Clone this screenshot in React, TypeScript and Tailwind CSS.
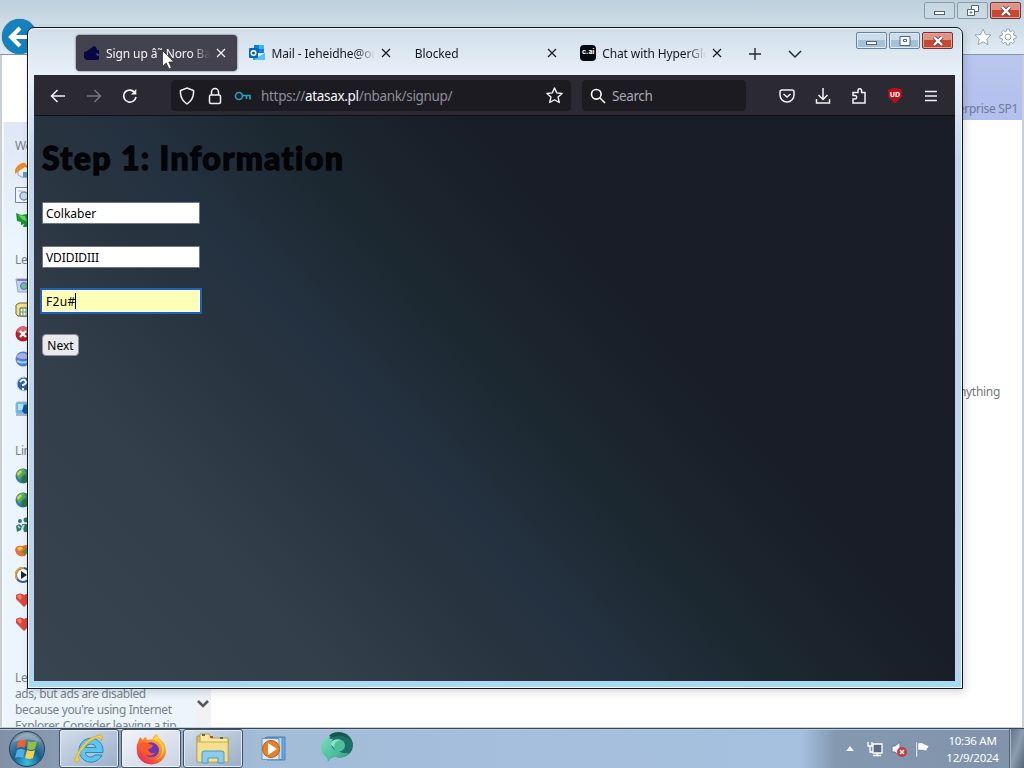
import type { ReactNode } from "react";

type TabProps = {
  title: string;
  icon?: ReactNode;
  active?: boolean;
};

type CaptionProps = {
  inactive?: boolean;
  restored?: boolean;
};

function CloseIcon() {
  return (
    <svg viewBox="0 0 10 10" className="size-2.5 shrink-0" stroke="currentColor" strokeWidth="1.2">
      <path d="M1 1l8 8M9 1L1 9" />
    </svg>
  );
}

function WalletIcon() {
  return (
    <svg viewBox="0 0 16 16" className="size-4 shrink-0">
      <path d="M0 7l3-1 7-5 2 1 1 3h2v4h-2v2h2v3l-1 1H2l-2-2z" fill="#080742" />
      <circle cx="13" cy="9" r="1" fill="#494063" />
    </svg>
  );
}

function OutlookIcon() {
  return (
    <svg viewBox="0 0 16 16" className="size-4 shrink-0">
      <path d="M5 0h10v8H5z" fill="#1682cf" />
      <path d="M10 0h5v4h-5z" fill="#35b8f1" />
      <path d="M5 4h5v4H5z" fill="#0b62ad" />
      <path d="M4 8l6 4 6-4v7H4z" fill="#2aa6e5" />
      <path d="M16 8v7H5z" fill="#50c8f4" />
      <rect y="3" width="9" height="10" rx="1" fill="#0867b8" />
      <circle cx="4.5" cy="8" r="2.3" fill="none" stroke="#fff" strokeWidth="1.4" />
    </svg>
  );
}

function CharacterIcon() {
  return (
    <span className="flex size-4 shrink-0 items-center justify-center rounded-[4px] bg-[#050912] pb-0.5 font-['Inter'] text-[7px] font-bold text-white">
      c.ai
    </span>
  );
}

function Tab({ title, icon, active }: TabProps) {
  return (
    <div
      className={
        active
          ? "flex h-9 w-[161px] items-center gap-1.5 rounded-[4px] bg-[#44424e] pr-[11px] pl-2 text-[#f4f4f8] shadow-[0_0_2px_#33313b]"
          : "flex h-9 w-[161px] items-center gap-1.5 pr-[11px] pl-2 text-[#15191e]"
      }
    >
      {icon}
      <span className="min-w-0 flex-1 overflow-hidden pt-0.5 text-[12px] tracking-[-0.1px] whitespace-nowrap [mask-image:linear-gradient(to_right,#000_82%,transparent)]">
        {title}
      </span>
      <CloseIcon />
    </div>
  );
}

function CaptionButtons({ inactive, restored }: CaptionProps) {
  const plain = inactive
    ? "flex h-[17px] w-[31px] items-center justify-center rounded-[2px] border border-[#8a9dab] bg-[#cddbe5]/50"
    : "flex h-[17px] w-[31px] items-center justify-center rounded-[2px] border border-[#6481a0] bg-linear-to-b from-[#cbdced] from-50% to-[#a5c0d9] to-50% shadow-[inset_0_0_0_1px_#e0ebf5]";
  return (
    <div className="flex">
      <div className={plain}>
        <svg viewBox="0 0 12 10" className="h-2.5 w-3">
          <rect x="0.5" y="5.5" width="10" height="3" fill="#fff" stroke="#536478" />
        </svg>
      </div>
      <div className={`ml-[2px] ${plain}`}>
        <svg viewBox="0 0 12 12" className="size-3" fill="#f7fbff" stroke="#536478">
          {restored ? (
            <>
              <path d="M4.5.5h7v6h-7z" />
              <path d="M.5 4.5h7v6h-7z" />
              <path d="M3 7h2v1H3z" strokeWidth="0.8" />
            </>
          ) : (
            <>
              <path d="M1 1.5h10v9H1z" />
              <path d="M4.5 4.5h3v2h-3z" />
            </>
          )}
        </svg>
      </div>
      <div className="ml-[2px] flex h-[17px] w-[31px] items-center justify-center rounded-[2px] border border-[#71333a] bg-linear-to-b from-[#df9183] from-50% to-[#c74733] to-50% shadow-[inset_0_0_0_1px_#e8a294]">
        <svg viewBox="0 0 12 10" className="h-2.5 w-3">
          <path d="M2 1l8 8M10 1L2 9" stroke="#6a4448" strokeWidth="4" />
          <path d="M2 1l8 8M10 1L2 9" stroke="#fff" strokeWidth="2.4" />
        </svg>
      </div>
    </div>
  );
}

function House() {
  return (
    <svg viewBox="0 0 16 16" className="size-4">
      <path d="M3 7l6-5 6 5v7l-6 2-6-3z" fill="#e9eef4" stroke="#8ca5c4" />
      <path d="M0 8C2 3 7 0 10 1l5 6-5-2-6 4-4 3z" fill="#ed8a25" />
      <path d="M8 10h4v5H8z" fill="#5a9bd6" />
    </svg>
  );
}

function PageSearch() {
  return (
    <svg viewBox="0 0 16 16" className="size-4">
      <path d="M.5.5h14v15H.5z" fill="#f1f5fb" stroke="#7087a5" />
      <circle cx="9" cy="9" r="4" fill="#c9ddf2" stroke="#8292aa" strokeWidth="1.5" />
      <path d="M3 4h5" stroke="#a8b9cf" />
    </svg>
  );
}

function GreenArrow() {
  return (
    <svg viewBox="0 0 16 16" className="size-4">
      <path d="M1 1l5 2 6-1 4 7-2 6H8l1-3-3 1v-3l-4-1z" fill="#159632" />
      <path d="M3 3l7 1 2 5-4-1z" fill="#67d456" />
    </svg>
  );
}

function Recycle() {
  return (
    <svg viewBox="0 0 16 16" className="size-4">
      <path d="M1 2h14l-2 13H3z" fill="#c4d4ee" stroke="#94a6cd" />
      <circle cx="9" cy="9" r="3.5" fill="#73b9ab" stroke="#63719f" />
      <path d="M2 3h12" stroke="#8677c0" strokeWidth="2" />
    </svg>
  );
}

function Calendar() {
  return (
    <svg viewBox="0 0 16 16" className="size-4">
      <path d="M1 3l3-2h11v13H3l-2-2z" fill="#eee28a" stroke="#716a3c" />
      <path d="M5 6h9v8H5z" fill="#f5faf0" stroke="#466c4b" />
      <path d="M8 6v8M11 6v8M5 10h9" stroke="#7a987c" />
    </svg>
  );
}

function RedCross() {
  return (
    <svg viewBox="0 0 16 16" className="size-4">
      <circle cx="8" cy="8" r="7.5" fill="#b81e2a" />
      <path d="M2 6a6 6 0 0112 0q-6 3-12 0" fill="#dc6770" />
      <path d="M5 5l6 6M11 5l-6 6" stroke="#fff" strokeWidth="2.4" />
    </svg>
  );
}

function BlueBall() {
  return (
    <svg viewBox="0 0 16 16" className="size-4">
      <circle cx="8" cy="8" r="7.5" fill="#597cd0" />
      <path d="M1 6q6-8 14 0-7 4-14 0" fill="#a9b1ea" />
      <path d="M2 10q6 3 12 0" fill="none" stroke="#8ed4f3" strokeWidth="2" />
    </svg>
  );
}

function HelpBall() {
  return (
    <svg viewBox="0 0 16 16" className="size-4">
      <circle cx="9" cy="8" r="7" fill="#315fae" stroke="#bdd6ef" />
      <path d="M5 6q4-5 6 0 0 2-3 3v1M8 12v2" fill="none" stroke="#fff" strokeWidth="2" />
    </svg>
  );
}

function Monitor() {
  return (
    <svg viewBox="0 0 16 16" className="size-4">
      <rect x="1" y="1" width="14" height="12" rx="2" fill="#6bb5e2" stroke="#9ab8d5" />
      <path d="M3 3h5v6H3z" fill="#a9e8f2" />
      <path d="M9 4l5-1v9l-4 1-3-3z" fill="#1254a4" />
      <path d="M1 14h13" stroke="#a6b9ce" strokeWidth="2" />
    </svg>
  );
}

function Globe() {
  return (
    <svg viewBox="0 0 16 16" className="size-4">
      <circle cx="8" cy="8" r="7.5" fill="#2d79bf" />
      <path d="M1 6q3-6 8-5l2 4-4 3-3 4z" fill="#61ad3d" />
      <path d="M8 8l6-1 1 4-5 4-4-1z" fill="#2d7735" />
      <path d="M2 5l4-3 1 2-4 4z" fill="#c3d866" />
    </svg>
  );
}

function People() {
  return (
    <svg viewBox="0 0 16 16" className="size-4" fill="#317a6c">
      <circle cx="5" cy="4" r="2" />
      <circle cx="11" cy="3" r="2.5" />
      <path d="M1 9l3-2 3 2-1 4-4 2zM7 7h6l2 8H9z" />
      <path d="M3 9l2 2M9 8l-2 5" stroke="#b9e2d6" strokeWidth="1.5" />
    </svg>
  );
}

function Swatch() {
  return (
    <svg viewBox="0 0 16 16" className="size-4">
      <path d="M0 8q1-5 7-4l8-2v4l-5 8q-8 2-10-6" fill="#e96d35" />
      <path d="M2 6q5-3 6 1L4 9z" fill="#f2c552" />
      <path d="M7 10l7-6 2 3-6 6z" fill="#4b973f" />
    </svg>
  );
}

function MediaBall() {
  return (
    <svg viewBox="0 0 16 16" className="size-4">
      <circle cx="8" cy="8" r="7" fill="#f8faf6" stroke="#315caa" strokeWidth="2" />
      <path d="M2 12A7 7 0 019 1" fill="none" stroke="#e5a031" strokeWidth="2" />
      <path d="M6 4l6 4-6 4z" fill="#172439" />
    </svg>
  );
}

function Heart() {
  return (
    <svg viewBox="0 0 16 16" className="size-4">
      <path d="M9 15L1 7V3q4-3 8 0 4-3 7 0v5z" fill="#e34539" />
      <path d="M2 4q3-3 5 1L5 8z" fill="#f28273" />
    </svg>
  );
}

const sections = [
  { label: "We", className: "mt-3", icons: [House, PageSearch, GreenArrow] },
  { label: "Le", className: "mt-4", icons: [Recycle, Calendar, RedCross, BlueBall, HelpBall, Monitor] },
  { label: "Lin", className: "mt-[18px]", icons: [Globe, Globe, People, Swatch, MediaBall, Heart, Heart] },
];

function ExplorerWindow() {
  return (
    <div className="flex h-[728px] w-full flex-col overflow-hidden">
      <header className="flex h-[55px] items-start justify-between border-b border-[#8796a5] bg-linear-to-b from-[#bdd0dc] to-[#e1ebf5]">
        <div className="mt-[19px] ml-0.5 flex size-[35px] items-center justify-center rounded-full bg-[#1682bd] shadow-[0_0_1px_#315d79]">
          <svg viewBox="0 0 24 24" className="size-6" fill="none" stroke="#fff" strokeWidth="4">
            <path d="M22 12H3M12 3l-9 9 9 9" />
          </svg>
        </div>
        <div className="flex flex-col items-end pt-0.5 pr-[3px]">
          <CaptionButtons inactive restored />
          <div className="mt-[9px] mr-1 flex gap-[7px]">
            <svg viewBox="0 0 18 18" className="size-[18px]" fill="#fff" stroke="#9aa8b2">
              <path d="M9 1l2.4 5.4 5.6.6-4.2 3.9 1.2 5.8L9 13.8l-5 2.9 1.2-5.8L1 7l5.6-.6z" />
            </svg>
            <svg viewBox="0 0 18 18" className="size-[18px]" fill="#fff" stroke="#9aa8b2">
              <path d="M7.5 1h3v2.1l1.6.7 1.6-1.5 2 2-1.5 1.6.7 1.6H17v3h-2.1l-.7 1.6 1.5 1.6-2 2-1.6-1.5-1.6.7V17h-3v-2.1l-1.6-.7-1.6 1.5-2-2 1.5-1.6-.7-1.6H1v-3h2.1l.7-1.6-1.5-1.6 2-2 1.6 1.5 1.6-.7z" />
              <circle cx="9" cy="9" r="3" />
            </svg>
          </div>
        </div>
      </header>
      <div className="flex min-h-0 flex-1 border-x-2 border-b border-[#c9d0d5] bg-white">
        <aside className="mt-[67px] flex w-[209px] shrink-0 overflow-hidden border-l-2 border-[#f5f7fb] bg-linear-to-b from-[#dfe6f6] to-[#ebf5fb] to-20%">
          <div className="w-[190px] pl-[11px] text-[12px] text-[#78828f]">
            {sections.map(({ label, className, icons }) => (
              <section key={label} className={className}>
                <h2 className="h-6 leading-6 tracking-[-0.4px]">{label}</h2>
                {icons.map((Icon, index) => (
                  <div key={index} className="flex h-[24.8px] items-center">
                    <Icon />
                  </div>
                ))}
              </section>
            ))}
            <p className="mt-[33px] text-[12px] leading-4 tracking-[-0.38px] whitespace-nowrap">
              Le
              <br />
              ads, but ads are disabled
              <br />
              because you're using Internet
              <br />
              Explorer. Consider leaving a tip
            </p>
          </div>
          <div className="flex flex-1 items-end justify-center bg-[#f0f2f5] pb-[18px]">
            <svg viewBox="0 0 12 9" className="h-[9px] w-3" fill="none" stroke="#525960" strokeWidth="2.5">
              <path d="M1 1l5 5 5-5" />
            </svg>
          </div>
        </aside>
        <main className="flex flex-1 flex-col items-end text-[12px] tracking-[-0.3px]">
          <div className="flex h-[65px] w-full items-end justify-end bg-linear-to-b from-[#b9c6ec] to-[#b3bfee] pr-1 pb-0.5 text-[#6f7999]">
            Enterprise SP1
          </div>
          <p className="mt-[263px] pr-[22px] text-[#73777c]">anything</p>
        </main>
      </div>
    </div>
  );
}

function TabStrip() {
  return (
    <div className="flex h-[47px] items-start pt-[7px] pl-[42px]">
      <div className="flex gap-[4.4px]">
        <Tab title="Sign up â˜ Noro Bank" icon={<WalletIcon />} active />
        <Tab title="Mail - Ieheidhe@outlook.com" icon={<OutlookIcon />} />
        <Tab title="Blocked" />
        <Tab title="Chat with HyperGlobal" icon={<CharacterIcon />} />
      </div>
      <div className="mt-3 ml-[15px] flex items-center gap-[26px] text-[#222a31]">
        <svg viewBox="0 0 14 14" className="size-3.5" stroke="currentColor" strokeWidth="1.4">
          <path d="M7 1v12M1 7h12" />
        </svg>
        <svg viewBox="0 0 14 14" className="size-3.5" fill="none" stroke="currentColor" strokeWidth="1.5">
          <path d="M1 4l6 6 6-6" />
        </svg>
      </div>
      <div className="-mt-[3px] mr-[2px] ml-auto">
        <CaptionButtons />
      </div>
    </div>
  );
}

function Toolbar() {
  return (
    <div className="flex h-[41px] items-center border-b border-[#101116] bg-[#2b2a33] pt-px text-[#f2f2f6]">
      <div className="ml-4 flex w-[121px] gap-5">
        <svg viewBox="0 0 16 16" className="size-4" fill="none" stroke="currentColor" strokeWidth="1.5">
          <path d="M15 8H2M7.5 2L1.5 8l6 6" />
        </svg>
        <svg viewBox="0 0 16 16" className="size-4" fill="none" stroke="#77767e" strokeWidth="1.5">
          <path d="M1 8h13M8.5 2l6 6-6 6" />
        </svg>
        <svg viewBox="0 0 16 16" className="size-4" fill="none" stroke="currentColor" strokeWidth="1.6">
          <path d="M14 9A6.2 6.2 0 112 6a6.200 6.200 0 0111-1" />
          <path d="M14.3 1v5.5H9z" fill="currentColor" stroke="none" />
        </svg>
      </div>
      <div className="flex h-[31px] w-[400px] items-center rounded-[4px] bg-[#1c1b22] pr-2 pl-2">
        <svg viewBox="0 0 16 18" className="h-[18px] w-4" fill="none" stroke="currentColor" strokeWidth="1.5">
          <path d="M8 1l6.5 2.5v3Q14 13 8 17 2 13 1.5 6.5v-3z" />
        </svg>
        <svg viewBox="0 0 14 18" className="ml-[13px] h-[18px] w-3.5" fill="none" stroke="currentColor" strokeWidth="1.5">
          <rect x="1.5" y="8" width="11" height="8.5" rx="1.5" />
          <path d="M3.5 8V5a3.5 3.5 0 017 0v3" />
        </svg>
        <svg viewBox="0 0 18 12" className="ml-3 h-3 w-[18px]" fill="none" stroke="#26a5b8" strokeWidth="1.6">
          <circle cx="5" cy="6" r="3.5" />
          <path d="M8.5 5.5H16v4M12.5 6v3" />
        </svg>
        <span className="ml-[9px] pt-0.5 text-[13.5px] tracking-[-0.32px] text-[#8f8e97]">
          https://<span className="text-[#fafafe]">atasax.pl</span>/nbank/signup/
        </span>
        <svg viewBox="0 0 18 18" className="ml-auto size-[17px]" fill="none" stroke="currentColor" strokeWidth="1.5" strokeLinejoin="round">
          <path d="M9 1l2.4 5.2 5.6.6-4.2 3.9 1.2 5.7L9 13.5l-5 2.9 1.2-5.7L1 6.8l5.6-.6z" />
        </svg>
      </div>
      <div className="ml-[11px] flex h-[31px] w-[164px] items-center gap-1.5 rounded-[4px] bg-[#1c1b22] pl-2 text-[13.5px] tracking-[-0.4px] text-[#a9a8b0]">
        <svg viewBox="0 0 16 16" className="size-4" fill="none" stroke="#fff" strokeWidth="1.6">
          <circle cx="6.3" cy="6.3" r="4.8" />
          <path d="M10 10l5 5" />
        </svg>
        <span className="pt-0.5">Search</span>
      </div>
      <div className="mr-4 ml-auto flex items-center gap-5">
        <svg viewBox="0 0 16 16" className="size-4" fill="none" stroke="currentColor" strokeWidth="1.5">
          <path d="M3 2h10q2 0 2 2v3a7 7 0 01-14 0V4q0-2 2-2z" />
          <path d="M4.5 6L8 9l3.5-3" />
        </svg>
        <svg viewBox="0 0 16 16" className="size-4" fill="none" stroke="currentColor" strokeWidth="1.5">
          <path d="M8 0v11M3.5 7L8 11.5 12.5 7M1.5 11v4h13v-4" />
        </svg>
        <svg viewBox="0 0 16 16" className="size-4" fill="none" stroke="currentColor" strokeWidth="1.5">
          <path d="M2 4.500h5V2.500a1.800 1.800 0 013.600 0v2h3.400v10.500H2v-4h2a1.700 1.700 0 000-3.400H2z" />
        </svg>
        <span className="flex size-4 items-center justify-center bg-[#ba101c] text-[7px] font-bold text-white [clip-path:polygon(50%_0,92%_13%,92%_60%,50%_100%,8%_60%,8%_13%)]">
          UD
        </span>
        <svg viewBox="0 0 16 16" className="size-4" stroke="currentColor" strokeWidth="1.4">
          <path d="M2 3.5h12M2 8h12M2 12.5h12" />
        </svg>
      </div>
    </div>
  );
}

function SignupPage() {
  return (
    <div className="flex flex-1 flex-col items-start bg-linear-[48deg,#38444f_0%,#323e4a_22%,#28343f_34%,#243140_41%,#1c2830_52%,#1a2029_62%,#181d27_66%] pl-2 text-[12px] text-black">
      <h1 className="mt-5 h-11 font-['Lato'] text-[32px] leading-[44px] font-black tracking-[1.4px] whitespace-nowrap text-[#020407] [-webkit-text-stroke:1.3px_#020407]">
        Step 1: Information
      </h1>
      <div className="mt-[22px] h-[22px] w-[158px] rounded-[1px] border border-[#71777f] bg-white pl-[3px] leading-[22px]">
        Colkaber
      </div>
      <div className="mt-[22px] h-[22px] w-[158px] rounded-[1px] border border-[#71777f] bg-white pl-[3px] leading-[22px] tracking-[-0.1px]">
        VDIDIDIII
      </div>
      <div className="mt-[22px] flex h-[22px] w-[158px] items-center border border-white bg-[#ffffb8] pl-[3px] leading-5 outline-2 outline-[#1f62b5]">
        <span className="pt-0.5 tracking-[0.3px]">F2u#</span>
        <span className="h-4 w-px bg-black" />
      </div>
      <button className="mt-[22px] h-[22px] w-[37px] rounded-[4px] border border-[#8f8f9d] bg-[#e9e9ed] text-center text-[12px] leading-[22px]">
        Next
      </button>
    </div>
  );
}

function FirefoxWindow() {
  return (
    <div className="absolute top-[27px] left-[27px] flex h-[662px] w-[936px] flex-col rounded-t-[7px] border border-[#111820] bg-[linear-gradient(to_bottom,#d0dee9_0,#e9f0f8_47px,#c3d6ee_130px,#bcd3ec_640px,#a3dcf4_660px)] pr-[7px] pb-[7px] pl-1.5 shadow-[inset_0_0_0_1px_#edf7ff,2px_3px_9px_#00000028]">
      <TabStrip />
      <Toolbar />
      <SignupPage />
    </div>
  );
}

function StartOrb() {
  return (
    <svg viewBox="0 0 38 38" className="size-[38px]">
      <defs>
        <radialGradient id="orb" cx="50%" cy="90%" r="90%">
          <stop offset="0" stopColor="#37c1e4" />
          <stop offset="0.45" stopColor="#14608f" />
          <stop offset="1" stopColor="#899eaf" />
        </radialGradient>
      </defs>
      <circle cx="19" cy="19" r="17.5" fill="url(#orb)" stroke="#203d54" />
      <path d="M10 11q4-3 8-1l-1 8q-4-2-8 0z" fill="#e86232" />
      <path d="M20 11q4 2 9 0l-2 8q-4 2-8 0z" fill="#8fc043" />
      <path d="M9 20q4-2 8 0l-2 8q-4-2-8 0z" fill="#4eade7" />
      <path d="M19 20q4 2 8 0l-2 8q-4 2-8 0z" fill="#f9ce48" />
      <path d="M5 12q14-17 28 0-14-5-28 0z" fill="#fff" opacity="0.25" />
    </svg>
  );
}

function ExplorerLogo() {
  return (
    <svg viewBox="0 0 32 32" className="size-8">
      <path
        d="M30 17A12 12 0 1029 22H22Q20 24 17.500 24 13 24 12.500 19.500H30zM12.800 14.500Q14 11 18 11t5 3.500z"
        fill="#5fc4ec"
        stroke="#2788bd"
        fillRule="evenodd"
      />
      <path d="M7 27Q-1 33 3 23 11 5 26 2q6-1 2 6 0-4-5-3Q10 11 5 25z" fill="#f1d04e" stroke="#c99b23" strokeWidth="0.6" />
    </svg>
  );
}

function FirefoxLogo() {
  return (
    <svg viewBox="0 0 32 32" className="size-8">
      <defs>
        <linearGradient id="fox" x1="1" y1="0" x2="0.2" y2="1">
          <stop offset="0" stopColor="#ffdf42" />
          <stop offset="0.45" stopColor="#ff872d" />
          <stop offset="1" stopColor="#e7254f" />
        </linearGradient>
      </defs>
      <path d="M3 9l2-5 3 3q1-3 3-3l1 3 6-1q0-4 4-5 1 4 4 6l3 3q2 4 2 8a14 13 0 01-29 0q-1-5 1-9z" fill="url(#fox)" />
      <path d="M11 11q6-4 11 1 4 5 0 10-5 4-10 1-5-5-1-12z" fill="#6938b4" />
      <path d="M5 12q5-5 9-1l4 1q-1 4-5 4 1 5 7 4-4 5-10 1-5-3-5-9z" fill="#fb5b29" />
      <path d="M18 7q8 1 9 8 1 9-7 12 9-2 9-12-1-5-5-8-2-3-2-5-3 2-4 5z" fill="#ffd33b" />
    </svg>
  );
}

function FolderLogo() {
  return (
    <svg viewBox="0 0 34 32" className="h-8 w-[34px]">
      <path d="M1 3h10l2 3h19v23H1z" fill="#e2c670" stroke="#a48b42" />
      <path d="M4 1h9l2 4h17v6H4z" fill="#fae8a1" stroke="#b69b4c" />
      <path d="M1 9h31v20H1z" fill="#f5df8d" stroke="#c9ac58" />
      <path d="M6 2h3M24 5h3" stroke="#427b4b" strokeWidth="2" />
      <path d="M14 4h3" stroke="#c0443d" strokeWidth="2" />
      <path d="M6 30V20q0-2 2-2h18q2 0 2 2v10h-6v-5H12v5z" fill="#8fcaea" stroke="#479ac5" />
    </svg>
  );
}

function MediaLogo() {
  return (
    <svg viewBox="0 0 28 26" className="h-[26px] w-7">
      <path d="M7 1h18v23H7z" fill="#6fa9dc" stroke="#4984b6" />
      <path d="M5 1.500h17v22H5z" fill="#b9daef" stroke="#4d87ba" />
      <path d="M2 2.500h17v21H2z" fill="#d7e7f3" stroke="#7197bd" />
      <circle cx="11" cy="13" r="8.5" fill="#e98022" stroke="#b75d1b" />
      <path d="M8 7l9 6-9 6z" fill="#fff" />
    </svg>
  );
}

function TealLogo() {
  return (
    <svg viewBox="0 0 34 32" className="h-8 w-[34px]">
      <defs>
        <linearGradient id="teal" x1="0" y1="0" x2="1" y2="1">
          <stop offset="0" stopColor="#7be0bd" />
          <stop offset="1" stopColor="#2da184" />
        </linearGradient>
      </defs>
      <ellipse cx="20" cy="14" rx="13" ry="12.500" fill="#1d6f68" />
      <path d="M8 6Q0 10 1 18q1 6 6 9l1 4q2-4 7-5 9 2 14-4-7 1-10-2-5 0-7-4-2-5 1-8-4 0-5-2z" fill="url(#teal)" />
      <circle cx="19" cy="14.500" r="6" fill="#4cc19c" />
      <path d="M14 16q0-6 7-7-5-2-9 1-3 4 2 6z" fill="#84e6c6" />
      <path d="M9 5q3-4 10-4 8 1 11 7-8-4-14-3-4 2-7 0z" fill="#16564d" />
    </svg>
  );
}

function Taskbar() {
  const button =
    "flex h-[39px] w-[60px] items-center justify-center rounded-[3px] border border-[#435263] bg-linear-to-br from-[#d4deeb] to-[#9aaec8] shadow-[inset_0_0_0_1px_#e0eaf4]";
  return (
    <footer className="flex h-10 items-center border-t border-[#384859] bg-[linear-gradient(to_right,#8090a7_0,#8798af_50px,#a3bcd8_260px,#a6c1df_800px,#8498b0_835px,#8093aa_100%)] shadow-[inset_0_1px_0_#b8cada]">
      <div className="ml-2 w-[51px]">
        <StartOrb />
      </div>
      <div className="flex gap-0.5">
        <div className={button}>
          <ExplorerLogo />
        </div>
        <div className="flex h-[39px] w-[60px] items-center justify-center rounded-[3px] border border-[#435263] bg-linear-to-br from-[#f1f4f9] to-[#c9d4e4] shadow-[inset_0_0_0_1px_#f1f6fc]">
          <FirefoxLogo />
        </div>
        <div className={button}>
          <FolderLogo />
        </div>
      </div>
      <div className="ml-[17px]">
        <MediaLogo />
      </div>
      <div className="-mt-1 ml-[32px]">
        <TealLogo />
      </div>
      <div className="ml-auto flex items-center">
        <svg viewBox="0 0 8 5" className="mr-[13px] h-[5px] w-2">
          <path d="M0 5l4-5 4 5z" fill="#f4f8fb" />
        </svg>
        <div className="flex gap-2">
          <svg viewBox="0 0 16 16" className="size-4" fill="#5b6c7e" stroke="#fff" strokeWidth="1.3">
            <path d="M6 3h9v9H6z" />
            <path d="M1 1v4h4V1M3 5v6h3M6 14.5h8M10 12v3" fill="none" />
          </svg>
          <svg viewBox="0 0 16 16" className="size-4">
            <path d="M1 5h3l5-4v14l-5-4H1z" fill="#f3f6f9" stroke="#69798a" />
            <circle cx="11" cy="11" r="5" fill="#c93b3e" />
            <path d="M9 9l4 4M13 9l-4 4" stroke="#fff" strokeWidth="1.5" />
          </svg>
          <svg viewBox="0 0 16 16" className="size-4" fill="#fff">
            <path d="M1 1h1.500v15H1zM3 2q4-1 6 1l5 2-3 5-3-1H3z" stroke="#5d7186" strokeWidth="0.4" />
          </svg>
        </div>
        <div className="ml-[11px] w-[61px] text-center text-[11.5px] leading-[17px] tracking-[-0.25px] whitespace-nowrap text-white">
          <div>10:36 AM</div>
          <div>12/9/2024</div>
        </div>
        <div className="ml-[6px] h-[39px] w-[15px] border-l border-[#536477] bg-linear-to-br from-[#607186] via-[#8d9dae] to-[#56677a] shadow-[inset_1px_0_0_#abb9c7]" />
      </div>
    </footer>
  );
}

export default function App() {
  return (
    <div className="relative h-[768px] w-[1024px] overflow-hidden bg-[#c8d7e5] font-['Noto_Sans','Open_Sans',sans-serif]">
      <ExplorerWindow />
      <FirefoxWindow />
      <Taskbar />
      <svg viewBox="0 0 12 20" className="absolute top-[50px] left-[162px] h-5 w-3">
        <path d="M.5.5v16l3.700-3.500 2.800 6 2.500-1-2.700-6h5z" fill="#fff" stroke="#222" strokeWidth="0.7" />
      </svg>
    </div>
  );
}
